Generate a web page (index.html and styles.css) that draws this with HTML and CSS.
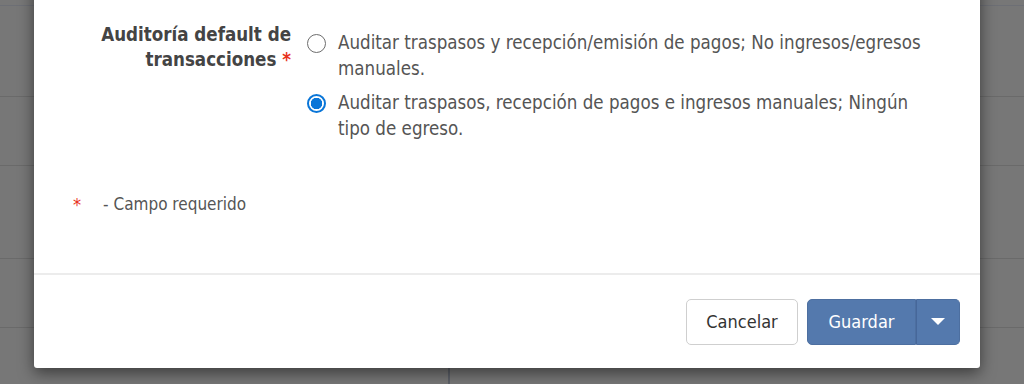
FILE: index.html
```html
<!DOCTYPE html>
<html lang="es">
<head>
<meta charset="utf-8">
<link rel="stylesheet" href="styles.css">
</head>
<body>
<div class="backdrop">
  <div class="bg-lines">
    <div class="bg-line l1"></div>
    <div class="bg-line l2"></div>
    <div class="bg-line l3"></div>
    <div class="bg-line l4"></div>
    <div class="bg-line l5"></div>
    <div class="bg-vline"></div>
  </div>
  <div class="modal">
    <div class="modal-body">
      <div class="form-row">
        <div class="label">
          <span class="label-line">Auditoría default de</span>
          <span class="label-line">transacciones&nbsp;<span class="req">*</span></span>
        </div>
        <div class="options">
          <label class="option">
            <span class="radio"></span>
            <span class="opt-text">Auditar traspasos y recepción/emisión de pagos; No ingresos/egresos manuales.</span>
          </label>
          <label class="option">
            <span class="radio checked"></span>
            <span class="opt-text">Auditar traspasos, recepción de pagos e ingresos manuales; Ningún tipo de egreso.</span>
          </label>
        </div>
      </div>
      <div class="note"><span class="req">*</span><span class="note-text">- Campo requerido</span></div>
    </div>
    <div class="modal-footer">
      <button class="btn btn-default">Cancelar</button>
      <div class="btn-group">
        <button class="btn btn-primary">Guardar</button>
        <button class="btn btn-primary btn-caret"><span class="caret"></span></button>
      </div>
    </div>
  </div>
</div>
</body>
</html>
```

FILE: styles.css
```css
* { box-sizing: border-box; }
html, body { margin: 0; padding: 0; }
body {
  width: 1024px;
  height: 384px;
  overflow: hidden;
  background: #777777;
  font-family: "DejaVu Sans Condensed", "DejaVu Sans", sans-serif;
  color: #555;
}
.backdrop {
  position: relative;
  width: 1024px;
  height: 384px;
  background: #777777;
}
.bg-lines { position: absolute; inset: 0; }
.bg-line { position: absolute; left: 0; right: 0; height: 1px; background: #6a6a6a; }
.l1 { top: 5px; background: #6d6f75; }
.l2 { top: 96px; }
.l3 { top: 165px; }
.l4 { top: 258px; }
.l5 { top: 327px; }
.bg-vline { position: absolute; left: 448px; top: 360px; width: 2px; height: 30px; background: #5c6068; }

.modal {
  position: absolute;
  left: 34px;
  top: -20px;
  width: 946px;
  height: 388px;
  background: #fff;
  box-shadow: 0 5px 15px rgba(0,0,0,0.5);
  border-radius: 0 0 3px 3px;
  display: flex;
  flex-direction: column;
}
.modal-body {
  flex: 1;
  padding: 40px 0 0 0;
}
.form-row {
  display: flex;
  align-items: flex-start;
}
.label {
  width: 257px;
  text-align: right;
  font-weight: bold;
  color: #444;
  font-size: 18.6px;
  line-height: 25px;
  padding-top: 2px;
  display: flex;
  flex-direction: column;
}
.label-line { display: block; white-space: nowrap; }
.req { color: #e8321c; }
.options {
  display: flex;
  flex-direction: column;
  gap: 8px;
  padding-top: 10px;
  padding-left: 16px;
  width: 640px;
}
.option {
  display: flex;
  align-items: flex-start;
  gap: 12px;
  font-size: 18.6px;
  line-height: 26px;
  color: #555;
}
.radio {
  flex: none;
  width: 19px;
  height: 19px;
  margin-top: 4px;
  border: 1.5px solid #6d6d6d;
  border-radius: 50%;
  background: #fff;
}
.radio.checked {
  border: 2px solid #0a76d8;
  background: radial-gradient(circle, #0a76d8 0 5.5px, #fff 6px);
}
.note {
  margin: 52px 0 0 39px;
  font-size: 17px;
  color: #555;
  display: flex;
  gap: 22px;
}
.note .req { font-size: 18px; }
.modal-footer {
  height: 95px;
  border-top: 2px solid #ececec;
  display: flex;
  justify-content: flex-end;
  align-items: center;
  gap: 9px;
  padding-right: 20px;
}
.btn {
  font-family: inherit;
  font-size: 18px;
  height: 46px;
  border-radius: 5px;
  cursor: pointer;
}
.btn-default {
  width: 112px;
  background: #fff;
  border: 1px solid #cfcfcf;
  color: #333;
}
.btn-group { display: flex; }
.btn-primary {
  background: #5479ad;
  border: 1px solid #4d6fa0;
  color: #fff;
}
.btn-group .btn-primary:first-child {
  width: 109px;
  border-radius: 5px 0 0 5px;
}
.btn-caret {
  width: 44px;
  border-radius: 0 5px 5px 0;
  border-left: 1px solid #46679a;
  display: flex;
  align-items: center;
  justify-content: center;
}
.caret {
  width: 0; height: 0;
  border-left: 7px solid transparent;
  border-right: 7px solid transparent;
  border-top: 7px solid #fff;
}
```
